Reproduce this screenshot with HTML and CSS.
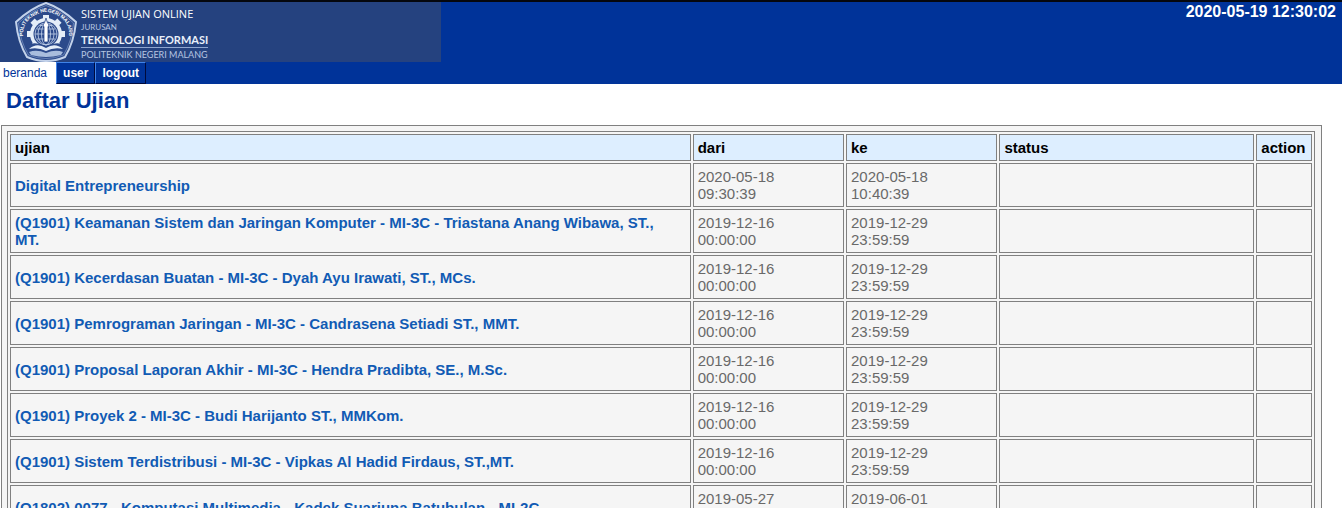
FILE: index.html
```html
<!DOCTYPE html>
<html lang="id">
<head>
<meta charset="utf-8">
<title>Sistem Ujian Online</title>
<link rel="stylesheet" href="styles.css">
</head>
<body>
<header class="header">
  <div class="banner">
    <div class="brand">
      <svg class="crest" viewBox="0 0 62 60" aria-hidden="true">
        <path d="M31 1Q46 6 61 20Q59 40 50 55Q31 63 12 55Q3 40 1 20Q16 6 31 1Z" fill="#2c4a8b" stroke="#c3d2ea" stroke-width="2"/>
        <path d="M31 3.500Q45 8 58.500 21Q57 39 48.500 53Q31 60 13.500 53Q5 39 3.500 21Q17 8 31 3.500Z" fill="none" stroke="#8fa6d0" stroke-width=".6"/>
        <path id="arc" d="M8.500 38C5 18 20 12 31 9.500C42 12 57 18 53.500 38" fill="none"/>
        <text class="crest-text"><textPath href="#arc" startOffset="50%" text-anchor="middle">POLITEKNIK NEGERI MALANG</textPath></text>
        <g fill="#e4edf8">
          <circle cx="31" cy="32" r="16"/>
          <rect x="28" y="13" width="6" height="38"/><rect x="12" y="29" width="38" height="6"/>
          <g transform="rotate(45 31 32)"><rect x="28" y="13" width="6" height="38"/><rect x="12" y="29" width="38" height="6"/></g>
        </g>
        <circle cx="31" cy="32" r="12.500" fill="#2c4a8b"/>
        <g fill="none" stroke="#c3d2ea" stroke-width=".8">
          <circle cx="31" cy="32" r="11"/>
          <ellipse cx="31" cy="32" rx="4.500" ry="11"/><ellipse cx="31" cy="32" rx="8" ry="11"/>
          <path d="M20 32h22M22 27h18M22 37h18M25 23.500h12"/>
        </g>
        <path d="M29 40V25l-1-2q2-2 3-7q1 5 3 7l-1 2v15Z" fill="#fff" stroke="#2c4a8b" stroke-width=".8"/>
        <path d="M11 43Q21 39 31 44Q41 39 51 43L48 50Q31 56 14 50Z" fill="#2c4a8b"/>
        <path d="M14 47Q22 40 31 46Q40 40 48 47Q39 45 31 49Q23 45 14 47Z" fill="#e4edf8"/>
        <path d="M14 50Q22 47 31 51Q40 47 48 50L46 53Q31 57 16 53Z" fill="#a9bddd"/>
      </svg>
      <div class="brand-text">
        <div class="brand-system">SISTEM UJIAN ONLINE</div>
        <div class="brand-dept">JURUSAN</div>
        <div class="brand-name">TEKNOLOGI INFORMASI</div>
        <div class="brand-school">POLITEKNIK NEGERI MALANG</div>
      </div>
    </div>
    <time class="clock" datetime="2020-05-19T12:30:02">2020-05-19 12:30:02</time>
  </div>
  <nav class="tabs">
    <a class="tab tab-active" href="#">beranda</a>
    <a class="tab" href="#">user</a>
    <a class="tab" href="#">logout</a>
  </nav>
</header>
<main>
  <h1 class="title">Daftar Ujian</h1>
  <div class="panel">
    <table class="exams">
      <colgroup><col class="col-exam"><col class="col-date"><col class="col-date"><col class="col-status"><col></colgroup>
      <thead>
        <tr><th scope="col">ujian</th><th scope="col">dari</th><th scope="col">ke</th><th scope="col">status</th><th scope="col">action</th></tr>
      </thead>
      <tbody>
        <tr><td><a href="#">Digital Entrepreneurship</a></td><td>2020-05-18<br>09:30:39</td><td>2020-05-18<br>10:40:39</td><td></td><td></td></tr>
        <tr><td><a href="#">(Q1901) Keamanan Sistem dan Jaringan Komputer - MI-3C - Triastana Anang Wibawa, ST.,<br>MT.</a></td><td>2019-12-16<br>00:00:00</td><td>2019-12-29<br>23:59:59</td><td></td><td></td></tr>
        <tr><td><a href="#">(Q1901) Kecerdasan Buatan - MI-3C - Dyah Ayu Irawati, ST., MCs.</a></td><td>2019-12-16<br>00:00:00</td><td>2019-12-29<br>23:59:59</td><td></td><td></td></tr>
        <tr><td><a href="#">(Q1901) Pemrograman Jaringan - MI-3C - Candrasena Setiadi ST., MMT.</a></td><td>2019-12-16<br>00:00:00</td><td>2019-12-29<br>23:59:59</td><td></td><td></td></tr>
        <tr><td><a href="#">(Q1901) Proposal Laporan Akhir - MI-3C - Hendra Pradibta, SE., M.Sc.</a></td><td>2019-12-16<br>00:00:00</td><td>2019-12-29<br>23:59:59</td><td></td><td></td></tr>
        <tr><td><a href="#">(Q1901) Proyek 2 - MI-3C - Budi Harijanto ST., MMKom.</a></td><td>2019-12-16<br>00:00:00</td><td>2019-12-29<br>23:59:59</td><td></td><td></td></tr>
        <tr><td><a href="#">(Q1901) Sistem Terdistribusi - MI-3C - Vipkas Al Hadid Firdaus, ST.,MT.</a></td><td>2019-12-16<br>00:00:00</td><td>2019-12-29<br>23:59:59</td><td></td><td></td></tr>
        <tr><td><a href="#">(Q1802) 0077 - Komputasi Multimedia - Kadek Suarjuna Batubulan - MI-2C</a></td><td>2019-05-27<br>00:00:00</td><td>2019-06-01<br>23:59:59</td><td></td><td></td></tr>
      </tbody>
    </table>
  </div>
</main>
</body>
</html>
```
FILE: styles.css
```css
* { box-sizing: border-box; }
body {
  margin: 0;
  height: 100vh;
  overflow: hidden;
  background: #fff;
  color: #696969;
  font: 15px/17px "Liberation Sans", Arial, sans-serif;
}
a { text-decoration: none; }
.header { background: #003399; border-top: 2px solid #05070d; }
.banner { display: flex; justify-content: space-between; align-items: flex-start; }
.brand {
  display: flex;
  gap: 4px;
  width: 441px;
  height: 60px;
  padding-left: 15px;
  background: #25427f;
  color: #e9effa;
  font-family: Lato, sans-serif;
}
.crest { width: 62px; height: 60px; flex: none; }
.crest-text { font: bold 5px "Liberation Sans", sans-serif; fill: #fff; }
.brand-text { padding-top: 5px; white-space: nowrap; }
.brand-system { font: 11px/14px "Open Sans", sans-serif; color: #fff; }
.brand-dept { font-size: 8px; line-height: 12px; color: #b6c5e2; }
.brand-name { font-size: 11px; line-height: 14px; font-weight: bold; border-bottom: 1px solid #8fa6d0; }
.brand-school { font-size: 9px; line-height: 14px; color: #b6c5e2; }
.clock { padding: 1px 6px 0 0; color: #fff; font-size: 16px; line-height: 18px; font-weight: bold; }
.tabs { display: flex; height: 22px; font-size: 12px; line-height: 20px; font-weight: bold; }
.tab {
  padding: 0 6px;
  color: #fff;
  border: 1px solid #000a3c;
  border-top-color: #3f83e8;
  border-left-color: #3f83e8;
}
.tab-active { padding: 0 8px 0 3px; background: #fff; color: #003399; border-color: #fff; border-left: 0; font-weight: normal; }
.title { margin: 0; padding: 4px 6px 11px; color: #003399; font-size: 22px; line-height: 26px; }
.panel { margin: 0 20px 0 1px; padding: 5px 6px 5px 5px; background: #f5f5f5; border: 1px solid #808080; }
.exams { width: 100%; border: 1px solid #808080; border-collapse: separate; border-spacing: 2px; table-layout: fixed; }
.exams th, .exams td { padding: 4px; border: 1px solid #808080; text-align: left; vertical-align: middle; }
.exams th { background: #ddeeff; color: #000; }
.exams td { height: 44px; }
.exams a { color: #115bb4; font-weight: bold; }
.col-exam { width: 52.6%; }
.col-date { width: 11.7%; }
.col-status { width: 19.7%; }
```
